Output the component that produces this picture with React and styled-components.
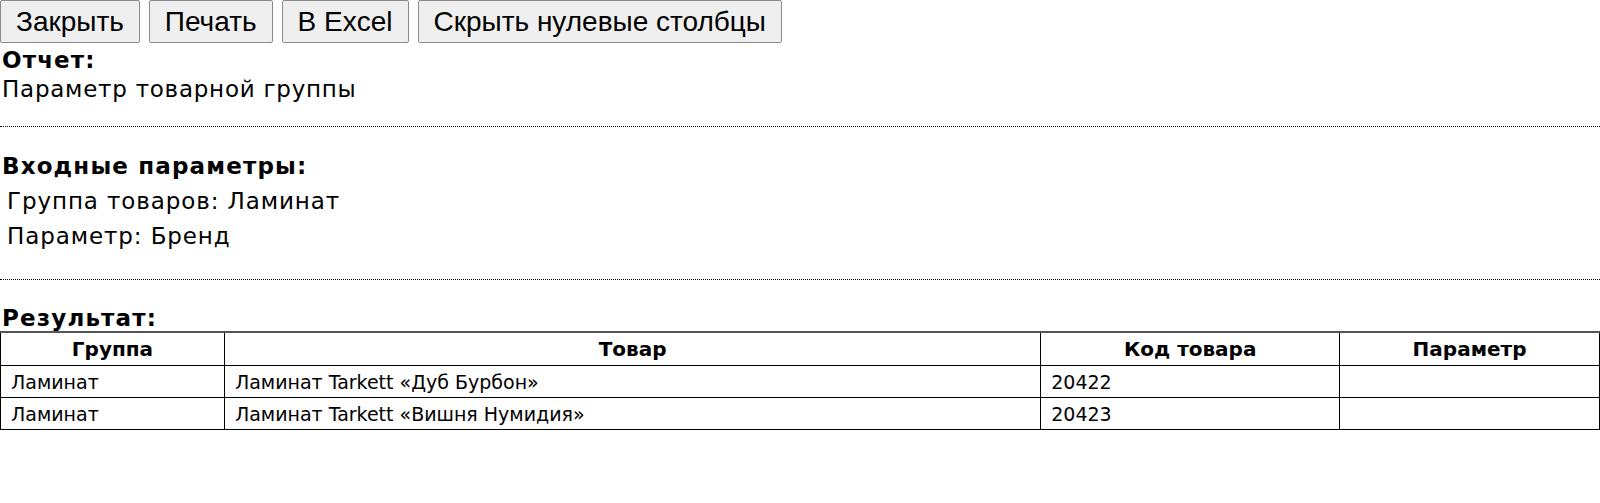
import React from "react";
import styled, { createGlobalStyle } from "styled-components";

const GlobalStyle = createGlobalStyle`
  html, body { margin: 0; padding: 0; background: #ffffff; }
  body { font-family: "DejaVu Sans", Verdana, sans-serif; color: #000; }
`;

const Page = styled.div`
  display: flex;
  flex-direction: column;
`;

const Toolbar = styled.div`
  display: flex;
  gap: 9px;
`;

const Button = styled.button`
  font-family: "Liberation Sans", Arial, sans-serif;
  font-size: 28px;
  height: 43px;
  padding: 0 15px;
  background: #efefef;
  color: #000;
  border: 1px solid #8a8a8a;
  border-radius: 2px;
  cursor: pointer;
`;

const Label = styled.div`
  font-size: 23px;
  font-weight: bold;
  letter-spacing: 1.15px;
  line-height: ${(p) => p.$lh || 29}px;
  margin-top: ${(p) => p.$mt || 0}px;
  padding-left: 2px;
`;

const Text = styled.div`
  font-size: 23px;
  letter-spacing: 0.75px;
  line-height: 29px;
  padding-left: 2px;
`;

const ParamList = styled.div`
  display: flex;
  flex-direction: column;
  margin-top: 3px;
  padding-left: 7px;
`;

const Param = styled.div`
  font-size: 23px;
  letter-spacing: 0.9px;
  line-height: 35px;
`;

const Divider = styled.hr`
  margin: ${(p) => p.$mt}px 0 0 0;
  border: none;
  border-top: 1px dotted #000;
  height: 0;
`;

const Table = styled.table`
  width: 100%;
  border-collapse: collapse;
  font-family: "DejaVu Sans", Tahoma, sans-serif;
  border-top: 2px solid #555;
`;

const Th = styled.th`
  font-size: 20px;
  font-weight: bold;
  height: 32px;
  padding: 0 10px;
  border: 1px solid #000;
  border-top: 2px solid #555;
  text-align: center;
`;

const Td = styled.td`
  font-size: 19px;
  height: 31px;
  padding: 0 10px;
  border: 1px solid #000;
  text-align: left;
`;

const columns = [
  { title: "Группа", width: 224 },
  { title: "Товар", width: 817 },
  { title: "Код товара", width: 299 },
  { title: "Параметр", width: 260 },
];

const rows = [
  ["Ламинат", "Ламинат Tarkett «Дуб Бурбон»", "20422", ""],
  ["Ламинат", "Ламинат Tarkett «Вишня Нумидия»", "20423", ""],
];

export default function App() {
  return (
    <Page>
      <GlobalStyle />
      <Toolbar>
        <Button>Закрыть</Button>
        <Button>Печать</Button>
        <Button>В Excel</Button>
        <Button>Скрыть нулевые столбцы</Button>
      </Toolbar>
      <Label $mt={3}>Отчет:</Label>
      <Text>Параметр товарной группы</Text>
      <Divider $mt={22} />
      <Label $mt={25}>Входные параметры:</Label>
      <ParamList>
        <Param>Группа товаров: Ламинат</Param>
        <Param>Параметр: Бренд</Param>
      </ParamList>
      <Divider $mt={25} />
      <Label $mt={26} $lh={25}>Результат:</Label>
      <Table>
        <colgroup>
          {columns.map((c) => (
            <col key={c.title} style={{ width: c.width }} />
          ))}
        </colgroup>
        <thead>
          <tr>
            {columns.map((c) => (
              <Th key={c.title}>{c.title}</Th>
            ))}
          </tr>
        </thead>
        <tbody>
          {rows.map((r, i) => (
            <tr key={i}>
              {r.map((cell, j) => (
                <Td key={j}>{cell}</Td>
              ))}
            </tr>
          ))}
        </tbody>
      </Table>
    </Page>
  );
}
